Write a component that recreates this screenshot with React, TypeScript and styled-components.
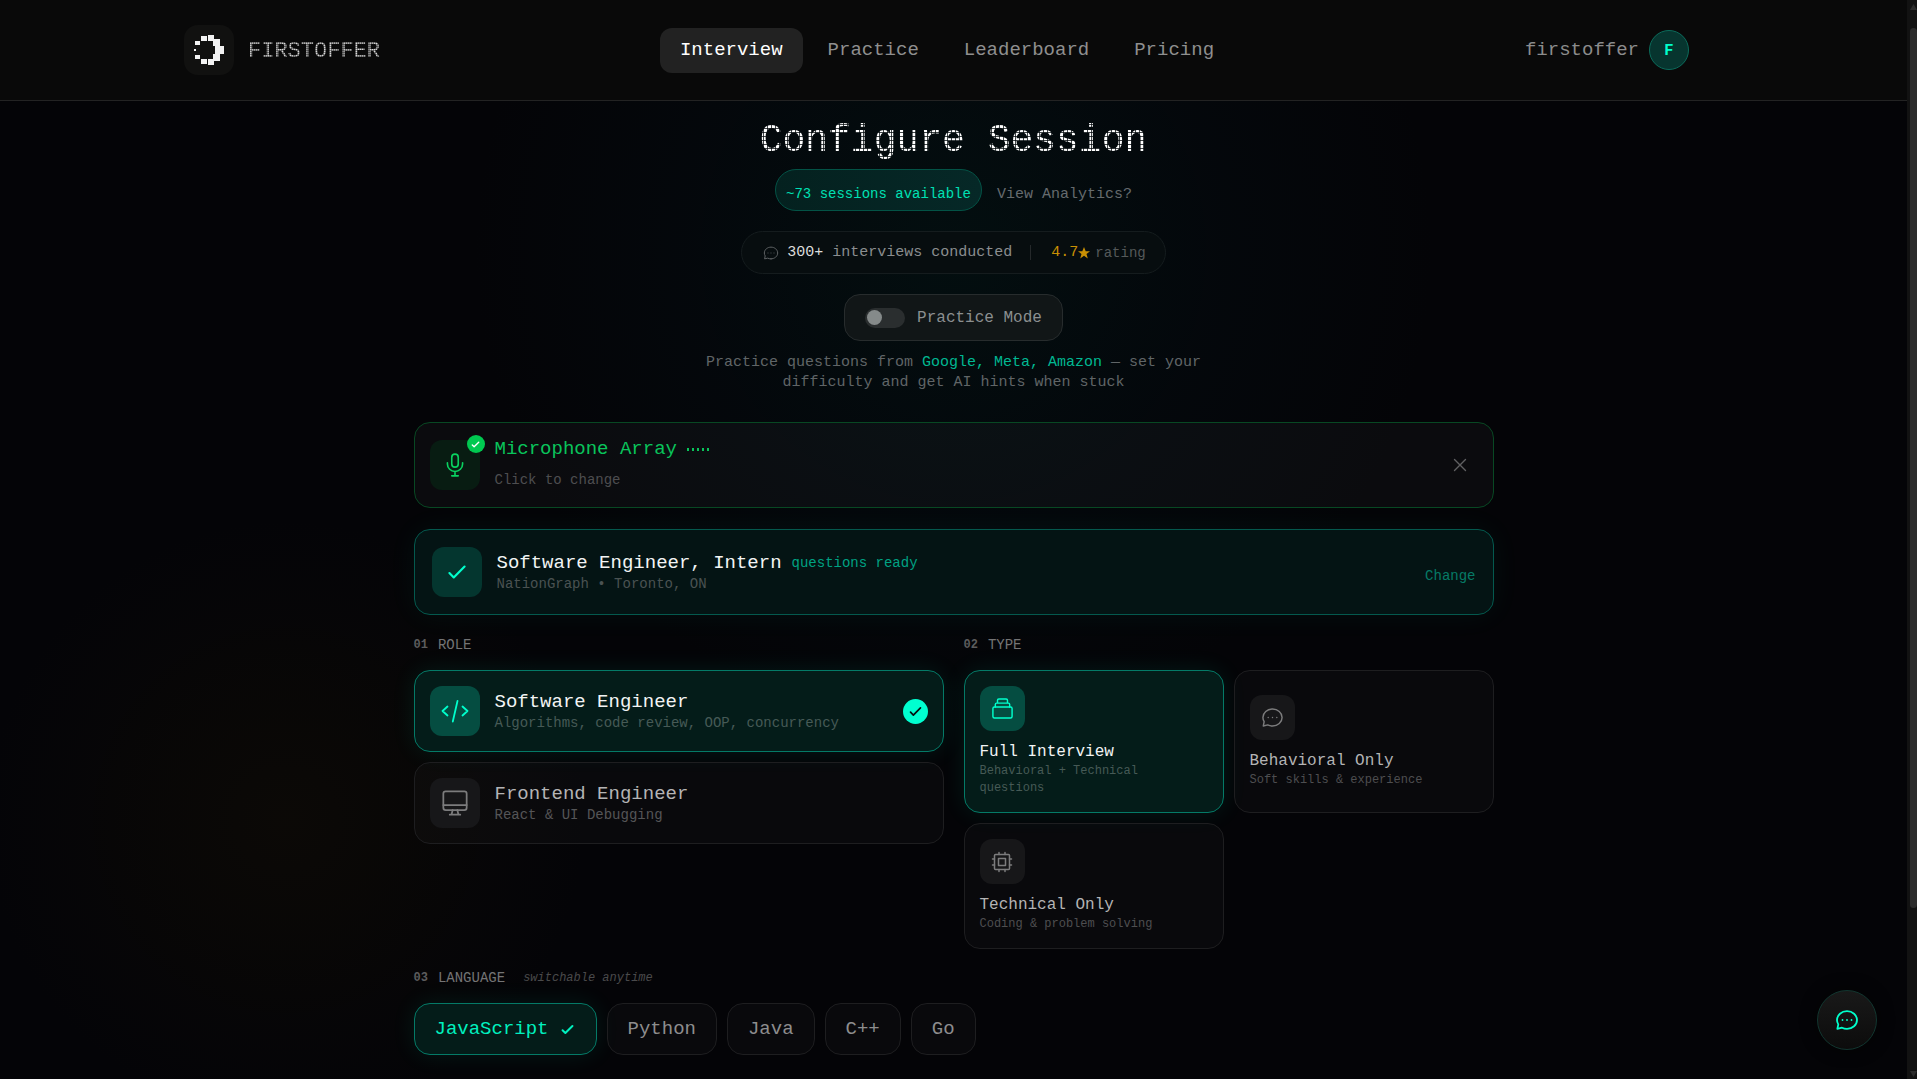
import React, { useState } from "react";
import styled, { createGlobalStyle, css } from "styled-components";

const mono = `"Liberation Mono", "DejaVu Sans Mono", monospace`;
const sans = `Inter, "Liberation Sans", sans-serif`;

const GlobalStyle = createGlobalStyle`
  *, *::before, *::after { box-sizing: border-box; }
  html, body { margin: 0; background: #040407; }
  body { overflow: hidden; font-family: ${mono}; color: #fff; }
  button { font: inherit; color: inherit; border: 0; background: none; padding: 0; cursor: pointer; text-align: left; }
  a { color: inherit; text-decoration: none; }
  h1, h2, p { margin: 0; font-weight: 400; }
  svg { display: block; flex: none; }
`;

const Shell = styled.div`
  position: relative;
  display: grid;
  grid-template-columns: minmax(0, 1fr) 10px;
  height: 100vh;
  overflow: hidden;
`;

const Page = styled.div`
  min-width: 0;
  overflow: hidden;
  background:
    radial-gradient(circle 480px at 50% 250px, rgba(0, 55, 50, 0.2), rgba(0, 32, 42, 0.12) 55%, transparent 100%),
    radial-gradient(circle 300px at 15% 820px, rgba(40, 28, 0, 0.2), transparent 100%),
    #040407;
`;

const Header = styled.header`
  height: 101px;
  padding: 0 18px 0 0;
  display: flex;
  align-items: center;
  justify-content: center;
  background: #090909;
  border-bottom: 1px solid #232323;
`;

const HeaderInner = styled.div`
  width: 100%;
  max-width: 1521px;
  display: flex;
  align-items: center;
  justify-content: space-between;
`;

const Brand = styled.a`
  display: flex;
  align-items: center;
  gap: 14px;
`;

const LogoBox = styled.span`
  width: 50px;
  height: 50px;
  border-radius: 14px;
  background: #111110;
`;

const Wordmark = styled.span`
  padding-top: 4px;
  font-size: 22px;
  line-height: 30px;
  color: #d8d8d8;
  mask-image:
    repeating-linear-gradient(90deg, #000 0 1px, rgba(0, 0, 0, 0.6) 1px 2px),
    repeating-linear-gradient(180deg, #000 0 1px, rgba(0, 0, 0, 0.6) 1px 2px);
  mask-composite: intersect;
`;

const Nav = styled.nav`
  display: flex;
  gap: 5px;
`;

const NavLink = styled.a<{ $active?: boolean }>`
  height: 45px;
  padding: 0 20px;
  display: flex;
  align-items: center;
  border-radius: 12px;
  font-size: 19px;
  color: ${(p) => (p.$active ? "#fff" : "#8f8f8f")};
  background: ${(p) => (p.$active ? "#222222" : "transparent")};
`;

const Account = styled.button`
  display: flex;
  align-items: center;
  gap: 10px;
  padding: 0 16px 0 11px;
  font-size: 19px;
  color: #8c8c8c;
`;

const Avatar = styled.span`
  width: 40px;
  height: 40px;
  border-radius: 50%;
  display: grid;
  place-items: center;
  border: 1px solid #0b6b5b;
  background: #07352f;
  color: #00ffcc;
  font: 700 15px/20px ${sans};
`;

const Main = styled.main`
  max-width: 1080px;
  margin: 0 auto;
  padding-top: 16px;
`;

const Intro = styled.section`
  display: flex;
  flex-direction: column;
  align-items: center;
`;

const Title = styled.h1`
  padding-top: 4px;
  font-size: 38px;
  line-height: 40px;
  margin-bottom: 8px;
  mask-image:
    repeating-linear-gradient(90deg, #000 0 3px, rgba(0, 0, 0, 0.25) 3px 4px),
    repeating-linear-gradient(180deg, #000 0 3px, rgba(0, 0, 0, 0.25) 3px 4px);
  mask-composite: intersect;
`;

const BadgeRow = styled.div`
  display: flex;
  gap: 15px;
  margin-bottom: 20px;
`;

const Badge = styled.span`
  height: 42px;
  padding: 8px 10px 0;
  display: flex;
  align-items: center;
  border-radius: 21px;
  border: 1px solid #035346;
  background: linear-gradient(90deg, #04211f, #062827);
  color: #00e0b4;
  font-size: 14px;
`;

const QuietLink = styled.a`
  height: 42px;
  padding-top: 8px;
  display: flex;
  align-items: center;
  color: #666b6e;
  font-size: 15px;
`;

const Stats = styled.div`
  height: 43px;
  padding: 0 19px 0 21px;
  display: flex;
  align-items: center;
  border-radius: 22px;
  border: 1px solid #151c1e;
  background: #070d0f;
  font-size: 15px;
  color: #8b8e8f;
  margin-bottom: 20px;
  strong { color: #dcdcdc; font-weight: 400; }
`;

const StatIcon = styled.span`
  margin-right: 8px;
  color: #5f6365;
`;

const Divider = styled.span`
  width: 1px;
  height: 15px;
  margin: 0 20px 0 18px;
  background: #25292b;
`;

const Score = styled.span`
  display: flex;
  align-items: center;
  margin-right: 5px;
  color: #c99004;
`;

const RatingWord = styled.span`
  font-size: 14px;
  color: #55595a;
`;

const ModeToggle = styled.label`
  height: 47px;
  padding: 0 20px;
  display: flex;
  align-items: center;
  gap: 12px;
  border-radius: 16px;
  border: 1px solid #272c2d;
  background: #111617;
  color: #8b8f90;
  font-size: 16px;
  cursor: pointer;
`;

const Switch = styled.input`
  appearance: none;
  margin: 0;
  width: 40px;
  height: 20px;
  padding: 0 2px;
  border-radius: 10px;
  background: #2a2e2f;
  display: flex;
  align-items: center;
  cursor: pointer;

  &::before {
    content: "";
    width: 15px;
    height: 15px;
    border-radius: 50%;
    background: #858a8a;
  }
  &:checked { justify-content: flex-end; background: #045446; }
`;

const Blurb = styled.p`
  max-width: 510px;
  margin: 12px 0 29px;
  text-align: center;
  font-size: 15px;
  line-height: 20px;
  color: #606567;
  em { font-style: normal; color: #00b892; }
`;

const Banner = styled.section<{ $ready?: boolean }>`
  height: 86px;
  margin-bottom: 21px;
  padding: 0 ${(p) => (p.$ready ? 17 : 15)}px;
  display: flex;
  align-items: center;
  gap: 15px;
  border-radius: 16px;
  border: 1px solid ${(p) => (p.$ready ? "#04594e" : "#084823")};
  background: ${(p) => (p.$ready ? "#041414" : "rgba(255, 255, 255, 0.03)")};
  box-shadow: ${(p) => (p.$ready ? "0 0 30px rgba(0, 255, 200, 0.05)" : "none")};
`;

const tones = {
  green: { bg: "#081c12", fg: "#09d260" },
  teal: { bg: "#04362f", fg: "#00ffcc" },
  bright: { bg: "#054d41", fg: "#00ffcc" },
  muted: { bg: "#171719", fg: "#7c7c7d" },
};

const IconTile = styled.span<{ $tone: keyof typeof tones; $small?: boolean }>`
  position: relative;
  flex: none;
  width: ${(p) => (p.$small ? 45 : 50)}px;
  height: ${(p) => (p.$small ? 45 : 50)}px;
  border-radius: 12px;
  display: grid;
  place-items: center;
  background: ${(p) => tones[p.$tone].bg};
  color: ${(p) => tones[p.$tone].fg};
`;

const TileBadge = styled.span`
  position: absolute;
  top: -5px;
  right: -5px;
  width: 18px;
  height: 18px;
  border-radius: 50%;
  display: grid;
  place-items: center;
  background: #00c950;
  color: #fff;
`;

const TextStack = styled.span`
  flex: 1;
  min-width: 0;
  display: flex;
  flex-direction: column;
`;

const Heading = styled.span<{ $tall?: boolean; $color?: string }>`
  display: flex;
  align-items: center;
  gap: 10px;
  font-size: 19px;
  line-height: ${(p) => (p.$tall ? 30 : 24)}px;
  color: ${(p) => p.$color ?? "#f2f4f4"};
`;

const Caption = styled.span<{ $tall?: boolean; $color?: string }>`
  font-size: 14px;
  line-height: ${(p) => (p.$tall ? 32 : 18)}px;
  color: ${(p) => p.$color ?? "#4e4e50"};
`;

const Levels = styled.span`
  display: flex;
  gap: 3px;
  i { width: 2px; height: 3px; background: #09c45b; }
`;

const CloseButton = styled.button`
  width: 36px;
  height: 36px;
  display: grid;
  place-items: center;
  color: #606062;
`;

const ChangeButton = styled.button`
  padding-top: 8px;
  font-size: 14px;
  line-height: 18px;
  color: #067a66;
`;

const Columns = styled.div`
  display: grid;
  grid-template-columns: repeat(2, minmax(0, 1fr));
  gap: 20px;
  margin-bottom: 20px;
`;

const SectionLabel = styled.h2`
  display: flex;
  align-items: center;
  gap: 10px;
  height: 18px;
  margin-bottom: 16px;
  font-size: 14px;
  line-height: 18px;
  color: #747475;
  b { font-size: 12px; color: #5c5c5d; }
  em { font-size: 12px; color: #4a4a4b; padding-left: 8px; }
`;

const RoleList = styled.div`
  display: flex;
  flex-direction: column;
  gap: 10px;
`;

const choice = css<{ $on: boolean }>`
  border-radius: 16px;
  border: 1px solid ${(p) => (p.$on ? "#047a67" : "#1e1e20")};
  background: ${(p) => (p.$on ? "#041c19" : "rgba(255, 255, 255, 0.025)")};
  box-shadow: ${(p) => (p.$on ? "0 0 24px rgba(0, 255, 200, 0.09)" : "none")};
`;

const RoleCard = styled.button<{ $on: boolean }>`
  ${choice}
  height: 82px;
  padding: 0 15px;
  display: flex;
  align-items: center;
  gap: 15px;
`;

const SelectedMark = styled.span`
  width: 25px;
  height: 25px;
  border-radius: 50%;
  display: grid;
  place-items: center;
  background: #00ffd0;
  color: #04110f;
`;

const TypeGrid = styled.div`
  display: grid;
  grid-template-columns: repeat(2, minmax(0, 1fr));
  gap: 10px;
`;

const TypeCard = styled.button<{ $on: boolean }>`
  ${choice}
  padding: 15px;
  display: flex;
  flex-direction: column;
  justify-content: center;
  align-items: flex-start;
`;

const TypeName = styled.span<{ $on: boolean }>`
  margin-top: 10px;
  font-size: 16px;
  line-height: 22px;
  color: ${(p) => (p.$on ? "#f2f4f4" : "#b4b4b5")};
`;

const TypeNote = styled.span<{ $on: boolean }>`
  font-size: 12px;
  line-height: 17px;
  color: ${(p) => (p.$on ? "#465a56" : "#4e4e50")};
`;

const Languages = styled.div`
  display: flex;
  flex-wrap: wrap;
  gap: 10px;
`;

const LanguageButton = styled.button<{ $on: boolean }>`
  ${choice}
  height: 52px;
  padding: 0 20px;
  display: flex;
  align-items: center;
  gap: 10px;
  font-size: 19px;
  color: ${(p) => (p.$on ? "#00f0bf" : "#8d8d8e")};
`;

const ChatButton = styled.button`
  position: absolute;
  right: 40px;
  bottom: 29px;
  width: 60px;
  height: 60px;
  border-radius: 50%;
  display: grid;
  place-items: center;
  border: 1px solid #12362f;
  background: linear-gradient(180deg, #191919, #0c0c0c);
  box-shadow: 0 0 16px rgba(0, 0, 0, 0.6);
  color: #00ffcc;
`;

const Track = styled.div`
  display: flex;
  flex-direction: column;
  align-items: center;
  justify-content: space-between;
  padding: 4px 0 2px 3px;
  background: #121212;
  color: #2c2c2c;
`;

const Thumb = styled.span`
  width: 7px;
  height: 82%;
  margin: 18px 0 auto;
  border-radius: 4px;
  background: #2c2c2c;
`;

type IconProps = { size: number; width?: number };

const Icon = ({ size, width = 1.5, children }: IconProps & { children: React.ReactNode }) => (
  <svg width={size} height={size} viewBox="0 0 24 24" fill="none" stroke="currentColor" strokeWidth={width} strokeLinecap="round" strokeLinejoin="round" aria-hidden="true">
    {children}
  </svg>
);

const ChatIcon = (p: IconProps) => (
  <Icon {...p}>
    <path d="M12 20.8C17.5 20.8 22 16.9 22 12S17.5 3.2 12 3.2S2 7.1 2 12C2 13.6 2.5 15.1 3.3 16.4L2.4 20.8L7 19.7C8.500 20.400 10.200 20.800 12 20.800Z" />
    <path d="M7.5 12h.01M12 12h.01M16.5 12h.01" />
  </Icon>
);
const CheckIcon = (p: IconProps) => (
  <Icon {...p}>
    <path d="M5 13L9 17L19 7" />
  </Icon>
);
const MicIcon = (p: IconProps) => (
  <Icon {...p}>
    <rect x="9" y="2" width="6" height="12" rx="3" />
    <path d="M5 10v1a7 7 0 0 0 14 0v-1M12 18v4M9 22h6" />
  </Icon>
);
const CodeIcon = () => (
  <svg width="28" height="28" viewBox="0 0 28 28" fill="none" stroke="currentColor" strokeWidth="1.8" strokeLinecap="round" strokeLinejoin="round" aria-hidden="true">
    <path d="M6.5 9.5L1.5 14L6.5 18.5M21.5 9.5L26.5 14L21.5 18.5M16.5 4L11.8 24.5" />
  </svg>
);
const MonitorIcon = (p: IconProps) => (
  <Icon {...p}>
    <rect x="2" y="2" width="20" height="16" rx="2" />
    <path d="M2 13.8h20M7.5 22h9M10 18l-1 4M14 18l1 4" />
  </Icon>
);
const StackIcon = (p: IconProps) => (
  <Icon {...p}>
    <rect x="2" y="10.5" width="20" height="11.5" rx="1.6" />
    <path d="M4.5 10.500V7.800A1.400 1.400 0 0 1 5.900 6.400H18.100A1.400 1.400 0 0 1 19.500 7.800V10.500M6.800 6.400V3.400A1.400 1.400 0 0 1 8.200 2H15.800A1.400 1.400 0 0 1 17.200 3.400V6.400" />
  </Icon>
);
const CpuIcon = (p: IconProps) => (
  <Icon {...p}>
    <rect x="4.500" y="4.500" width="15" height="15" rx="1" />
    <rect x="8.500" y="8.500" width="7" height="7" />
    <path d="M9 4.500V2.500M15 4.500V2.500M9 19.500V21.500M15 19.500V21.500M4.500 9H2.500M4.500 15H2.500M19.500 9H21.500M19.500 15H21.500" />
  </Icon>
);
const CloseIcon = (p: IconProps) => (
  <Icon {...p}>
    <path d="M6 6L18 18M18 6L6 18" />
  </Icon>
);

const Logo = () => (
  <svg width="50" height="50" viewBox="0 0 150 150" fill="#f2f2f2" shapeRendering="crispEdges" aria-hidden="true">
    <rect x="29" y="71" width="8" height="8" />
    <rect x="33" y="48" width="14" height="12" />
    <rect x="33" y="90" width="14" height="12" />
    <rect x="52" y="33" width="16" height="15" />
    <rect x="52" y="102" width="16" height="15" />
    <path d="M73 30H91V43H107V62H121V88H107V107H91V120H73V103H86V88H94V62H86V47H73Z" />
  </svg>
);

const roles = [
  { name: "Software Engineer", note: "Algorithms, code review, OOP, concurrency", icon: <CodeIcon /> },
  { name: "Frontend Engineer", note: "React & UI Debugging", icon: <MonitorIcon size={28} /> },
];
const types = [
  { name: "Full Interview", note: "Behavioral + Technical questions", icon: <StackIcon size={23} /> },
  { name: "Behavioral Only", note: "Soft skills & experience", icon: <ChatIcon size={23} /> },
  { name: "Technical Only", note: "Coding & problem solving", icon: <CpuIcon size={24} /> },
];
const languages = ["JavaScript", "Python", "Java", "C++", "Go"];

export default function App() {
  const [role, setRole] = useState(0);
  const [type, setType] = useState(0);
  const [language, setLanguage] = useState(0);
  const [practice, setPractice] = useState(false);

  return (
    <Shell>
      <GlobalStyle />
      <Page>
        <Header>
          <HeaderInner>
            <Brand href="#home">
              <LogoBox><Logo /></LogoBox>
              <Wordmark>FIRSTOFFER</Wordmark>
            </Brand>
            <Nav>
              <NavLink href="#interview" $active>Interview</NavLink>
              <NavLink href="#practice">Practice</NavLink>
              <NavLink href="#leaderboard">Leaderboard</NavLink>
              <NavLink href="#pricing">Pricing</NavLink>
            </Nav>
            <Account type="button">
              firstoffer
              <Avatar>F</Avatar>
            </Account>
          </HeaderInner>
        </Header>

        <Main>
          <Intro>
            <Title>Configure Session</Title>
            <BadgeRow>
              <Badge>~73 sessions available</Badge>
              <QuietLink href="#analytics">View Analytics?</QuietLink>
            </BadgeRow>
            <Stats>
              <StatIcon><ChatIcon size={16} /></StatIcon>
              <span><strong>300+</strong> interviews conducted</span>
              <Divider />
              <Score>
                4.7
                <svg width="12" height="12" viewBox="0 0 24 24" fill="currentColor" aria-hidden="true">
                  <path d="M12 0l3.400 8.500H24l-7 5.500 2.600 9L12 17.500 4.400 23 7 14 0 8.500h8.600z" />
                </svg>
              </Score>
              <RatingWord>rating</RatingWord>
            </Stats>
            <ModeToggle htmlFor="practice-mode">
              <Switch id="practice-mode" type="checkbox" role="switch" checked={practice} onChange={(e) => setPractice(e.target.checked)} />
              Practice Mode
            </ModeToggle>
            <Blurb>
              Practice questions from <em>Google, Meta, Amazon</em> — set your difficulty and get AI hints when stuck
            </Blurb>
          </Intro>

          <Banner>
            <IconTile $tone="green">
              <MicIcon size={26} />
              <TileBadge><CheckIcon size={11} width={3} /></TileBadge>
            </IconTile>
            <TextStack>
              <Heading $tall $color="#09c45b">
                Microphone Array
                <Levels><i /><i /><i /><i /><i /></Levels>
              </Heading>
              <Caption $tall>Click to change</Caption>
            </TextStack>
            <CloseButton type="button" aria-label="Dismiss microphone"><CloseIcon size={22} /></CloseButton>
          </Banner>

          <Banner $ready>
            <IconTile $tone="teal"><CheckIcon size={26} width={2} /></IconTile>
            <TextStack>
              <Heading>
                Software Engineer, Intern
                <Caption $color="#00a283">questions ready</Caption>
              </Heading>
              <Caption $color="#4a5252">NationGraph • Toronto, ON</Caption>
            </TextStack>
            <ChangeButton type="button">Change</ChangeButton>
          </Banner>

          <Columns>
            <section>
              <SectionLabel><b>01</b>ROLE</SectionLabel>
              <RoleList>
                {roles.map((r, i) => (
                  <RoleCard key={r.name} type="button" $on={i === role} aria-pressed={i === role} onClick={() => setRole(i)}>
                    <IconTile $tone={i === role ? "bright" : "muted"}>{r.icon}</IconTile>
                    <TextStack>
                      <Heading $color={i === role ? "#f2f4f4" : "#b4b4b5"}>{r.name}</Heading>
                      <Caption $color={i === role ? "#465a56" : "#555557"}>{r.note}</Caption>
                    </TextStack>
                    {i === role && <SelectedMark><CheckIcon size={17} width={2.4} /></SelectedMark>}
                  </RoleCard>
                ))}
              </RoleList>
            </section>
            <section>
              <SectionLabel><b>02</b>TYPE</SectionLabel>
              <TypeGrid>
                {types.map((t, i) => (
                  <TypeCard key={t.name} type="button" $on={i === type} aria-pressed={i === type} onClick={() => setType(i)}>
                    <IconTile $small $tone={i === type ? "bright" : "muted"}>{t.icon}</IconTile>
                    <TypeName $on={i === type}>{t.name}</TypeName>
                    <TypeNote $on={i === type}>{t.note}</TypeNote>
                  </TypeCard>
                ))}
              </TypeGrid>
            </section>
          </Columns>

          <section>
            <SectionLabel><b>03</b>LANGUAGE<em>switchable anytime</em></SectionLabel>
            <Languages>
              {languages.map((name, i) => (
                <LanguageButton key={name} type="button" $on={i === language} aria-pressed={i === language} onClick={() => setLanguage(i)}>
                  {name}
                  {i === language && <CheckIcon size={17} width={2.8} />}
                </LanguageButton>
              ))}
            </Languages>
          </section>
        </Main>
      </Page>
      <Track>
        <svg width="7" height="6" viewBox="0 0 7 6" fill="currentColor" aria-hidden="true"><path d="M3.500 0L7 6H0z" /></svg>
        <Thumb />
        <svg width="7" height="6" viewBox="0 0 7 6" fill="currentColor" aria-hidden="true"><path d="M3.500 6L7 0H0z" /></svg>
      </Track>
      <ChatButton type="button" aria-label="Open chat"><ChatIcon size={24} width={1.8} /></ChatButton>
    </Shell>
  );
}
